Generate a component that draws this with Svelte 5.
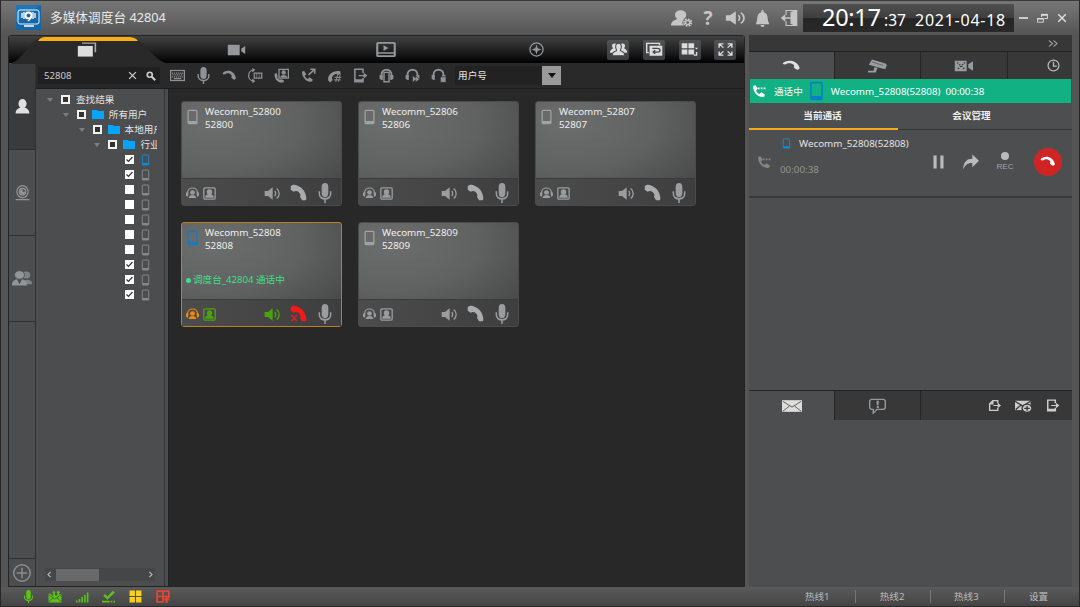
<script lang="ts">
    const phone = '<path d="M1 8C5 1 18 1 22 15c1 3-1 4-3 5l-4-4c0-2 1-3 0-5-2-3-5-4-8-3-1 2-2 2-4 2-1 0-2-1-2-2z"/>';
    const receiver =
        '<path d="M1 3c1-2 6-3 9-1 8 3 12 9 13 17 0 2 0 4-1 4h-5l-3-5c3-3-3-9-6-8l-3 1-4-3z"/>';
    const handset =
        '<path d="M2 3l4-1 4 6-3 3c1 3 3 5 6 6l3-3 6 4-1 4c-10 2-20-8-19-19z"/>';
    const bust = '<circle cx="12" cy="8" r="6.500"/><path d="M1 22c0-6 4-7 8-9h6c4 2 8 3 8 9z"/>';
    const line = 'fill="none" stroke="currentColor"';
    const headset = `<path ${line} stroke-width="3" d="M4 16V11C4 0 20 0 20 11v5"/><path d="M1 11h5v8H4l-3-2zM18 11h5v6l-3 2h-2z"/>`;

    const icons: Record<string, string> = {
        phone,
        receiver,
        handset,
        bust,
        stack: '<path d="M1 7h18v15H1z"/><path d="M6 2h17v14h-2V4H6z" opacity=".7"/>',
        video: '<path d="M1 3h15v18H1zM23 5v14l-5-5v-4z"/>',
        player: `<rect ${line} stroke-width="2.500" x="1.500" y="2.500" width="21" height="19" rx="1"/><path d="M1 16h22v2H1zM9 6l6 4-6 4z"/>`,
        compass: `<circle ${line} cx="12" cy="12" r="10.500"/><path d="M12 4l2 6 6 2-6 2-2 6-2-6-6-2 6-2z"/>`,
        close: `<path ${line} stroke-width="3.500" d="M3 3l18 18M21 3L3 21"/>`,
        search: `<circle ${line} cx="9" cy="9" r="6" stroke-width="4"/><path ${line} stroke-width="5" d="M14 14l8 8"/>`,
        keyboard: `<rect ${line} x="1" y="4" width="22" height="16" stroke-width="2"/><path ${line} stroke-dasharray="2 1.300" d="M3 8h18M4 11h17M3 14h18"/><path d="M6 16h12v2H6z"/>`,
        mic: `<rect x="7" y="0" width="10" height="17" rx="5"/><path ${line} stroke-width="2.300" d="M3.500 10v3c0 8 17 8 17 0v-3M12 19v5"/>`,
        transfer: `<path ${line} d="M10 3C-2 3-2 21 10 21M7 1l3 2-3 3M7 18l3 3-3 2M10 8h12v8H10z"/><path ${line} stroke-width="1" d="M14 8v8M18 8v8"/>`,
        videocall: `<path ${line} d="M8 2h15v14H8z"/><circle cx="15.500" cy="7" r="3.500"/><path d="M10 15c1-5 10-5 11 0zM1 9l3-1 2 5-1 2c2 3 4 4 7 3l4 2-1 3C7 25 0 18 1 9z"/>`,
        callout: `<g transform="translate(0 3) scale(.85)">${handset}</g><path ${line} stroke-width="2.500" d="M12 11l9-8M15 2h7v7"/>`,
        conference: `<path d="M2 20C0 10 11 3 21 5l1 5-5 1-2-2C11 10 8 13 8 16l1 3-4 4z"/><path ${line} stroke-width="1.500" d="M12 15h11M11 19h11M17 11l-3 11M21 11l-3 11"/>`,
        deviceout: `<path ${line} stroke-width="2.500" d="M16 8V2H3v20h13v-6"/><path d="M3 18h13v4H3zM9 11h8V7l6 5-6 5v-4H9z"/>`,
        headphone: `${headset}<path fill="#292929" stroke="currentColor" stroke-width="2.300" d="M8 7h8v15H8z"/>`,
        listen: `${headset}<path stroke="#292929" stroke-width="1" d="M12 12l5 4v-4l6 6-6 5v-4l-5 4z"/>`,
        listenstop: `${headset}<path stroke="#292929" stroke-width="1" d="M15 14h9v9h-9z"/>`,
        crowd: '<g transform="translate(-1 1) scale(.65)"><circle cx="12" cy="8" r="6"/><path d="M1 25c0-6 4-9 8-12h6c4 2 8 6 8 12z"/></g><g transform="translate(9.500 1) scale(.65)"><circle cx="12" cy="8" r="6"/><path d="M1 25c0-6 4-9 8-12h6c4 2 8 6 8 12z"/></g><path stroke="#45474a" stroke-width="1.500" d="M8 8c0-8 8-8 8 0 0 4-2 4-1 6 3 2 6 2 6 8H3c0-6 3-6 6-8 1-2-1-2-1-6z"/>',
        windows: `<path ${line} d="M4 17H1V2h18v3"/><path d="M5 6h18v16H5z"/><path fill="none" stroke="#45474a" stroke-width="2" d="M9 10h7c5 0 5 6 0 6h-6m3-3l-3 3 3 3"/>`,
        grid: '<path d="M1 2h8v8H1zM10.500 2h8v8h-8zM1 12h8v8H1zM10.500 12h8v8h-8zM19.500 9h4.500l-2 3z"/><path d="M23 16v6h-5v-2h3v-4z"/>',
        expand: `<path ${line} d="M3 9V3h6M3 3l6 6M15 3h6v6M21 3l-6 6M3 15v6h6M3 21l6-6M15 21h6v-6M21 21l-6-6"/>`,
        useradmin: `<g transform="translate(-1 0)">${bust}</g><circle cx="19" cy="18" r="6" fill="#666"/><circle cx="19" cy="18" r="4" ${line} stroke-dasharray="2 1.100" stroke-width="3"/><circle cx="19" cy="18" r="2.500" ${line} stroke-width="1.500"/>`,
        speaker: `<path d="M1 8h5l7-6v20l-7-6H1z"/><path ${line} d="M16 8c2 2 2 6 0 8M19 4c5 4 5 12 0 16"/>`,
        bell: '<path d="M12 0c2 0 2 2 2 3 7 2 6 8 7 13l2 4H1l2-4c1-5 0-11 7-13 0-1 0-3 2-3zM9 21h6c0 4-6 4-6 0z"/>',
        exit: `<path ${line} stroke-width="1.500" d="M8 8V2h14v20H8v-6"/><path d="M14 4l9-3v22l-9-3zM1 12l6-5v4h7v2H7v4z"/>`,
        restore: `<path ${line} d="M10 9V3h13v9h-7M1 12h13v8H1z"/><path d="M9 2h14v4H9zM1 11h13v3H1z"/>`,
        more: `<path ${line} stroke-width="2.500" d="M4 4l7 8-7 8M13 4l7 8-7 8"/>`,
        cctv: '<path d="M5 1l18 7-3 9L1 10zM19 8l5 2-2 7-4-1zM8 14l4 1-2 8H0v-3h7z"/><path d="M5 5l14 6" stroke="#383838" stroke-width=".7"/>',
        film: '<path d="M1 3h15v18H1zM24 4v16l-6-5V9z"/><path fill="none" stroke="#383838" stroke-dasharray="2 2" d="M4 6l10 12M14 6L4 18"/>',
        clock: `<circle ${line} stroke-width="2.300" cx="12" cy="12" r="10"/><path ${line} stroke-width="2.300" d="M12 5v8h6"/>`,
        talking: `${handset}<path d="M10 6h3v3h-3zM15 6h3v3h-3zM20 6h3v3h-3z"/>`,
        mobile: `<rect ${line} x="5" y="2" width="14" height="20" rx="1.500"/><path d="M5 18h14v4H5z"/>`,
        agent: `<path ${line} stroke-width="2.300" d="M3 15V11C3-1 21-1 21 11v4"/><path d="M0 11h4v8H2l-2-2zM20 11h4v6l-2 2h-2z"/><circle cx="12" cy="11" r="4.500"/><path d="M5 22c0-8 14-8 14 0z"/>`,
        portrait: `<rect ${line} stroke-width="2.400" x="1.500" y="1.500" width="21" height="21" rx="2"/><circle cx="12" cy="9" r="5"/><path d="M4 20c0-6 4-5 6-7h4c2 2 6 1 6 7z"/>`,
        hangup: `${receiver}<path ${line} stroke-width="1.800" d="M2 14l8 9M10 14l-8 9"/>`,
        pause: '<path d="M4 1h5v22H4zM15 1h5v22h-5z"/>',
        forward: '<path d="M14 2l10 9-10 9v-6C7 14 4 16 0 23 1 12 6 8 14 8z"/>',
        mail: '<path d="M0 2h24v20H0z"/><path fill="none" stroke="#4b4c4e" stroke-width="1.200" d="M1 4l11 10L23 4M1 21l8-9M23 21l-8-9"/>',
        alert: `<path ${line} d="M3 2h18l2 2v11l-2 2H11l-5 6v-6H3l-2-2V4z"/><path d="M10.500 4h3.500l-.5 7h-2.500zM11 12h3v3h-3z"/>`,
        fileout: `<path ${line} stroke-width="2.500" d="M18 8V3H9L3 9v12h15v-5M9 3v6H3"/><path d="M10 11h8V7l6 5-6 5v-4h-8z"/>`,
        mailadd: '<path d="M0 3h22v16H0z"/><path fill="none" stroke="#383838" d="M0 4l11 8L22 4M1 18l7-7"/><circle cx="17" cy="16" r="7" stroke="#383838"/><path stroke="#383838" d="M17 12v8M13 16h8"/>',
        camera: `<circle ${line} cx="12" cy="10" r="9"/><circle ${line} cx="12" cy="10" r="5"/><path d="M12 6a4 4 0 1 0 4 4h-4zM1 21h22v2H1z"/>`,
        group: '<g opacity=".75"><circle cx="17" cy="7" r="5"/><path d="M13 20c0-8 10-8 11-2v2z"/></g><circle cx="9" cy="7" r="6" stroke="#4c4d4f" stroke-width="1"/><path d="M0 22c0-6 2-8 6-9l3 7 3-7c4 1 6 3 6 9z"/>',
        plus: `<circle ${line} cx="12" cy="12" r="11"/><path ${line} d="M12 5v14M5 12h14"/>`,
        left: `<path ${line} stroke-width="3.500" d="M15 5l-7 7 7 7"/>`,
        right: `<path ${line} stroke-width="3.500" d="M9 5l7 7-7 7"/>`,
        inbox: '<path d="M1 7h5v3h3V5L7 5l3-4 3 4h-1v5h4V5h-2l4-4 3 4h-2v3h4v15H1z"/><path d="M2 9l10 8L22 9M2 21l7-7M22 21l-7-7" fill="none" stroke="#444" stroke-width="1.300"/>',
        signal: '<path d="M0 19h3v4H0zM5 16h3v7H5zM10 12h3v11h-3zM15 8h3v15h-3zM20 3h3v20h-3z"/>',
        check: `<path ${line} stroke-width="4.500" d="M4 9l6 6L22 3"/><path d="M0 20h14v3H0zM16 20h3v3h-3zM21 20h3v3h-3z"/>`,
        tiles: '<path d="M1 1h10v10H1zM13 1h10v10H13zM1 13h10v10H1zM13 13h10v10H13z"/>',
        tilesup: `<path ${line} stroke-width="3" d="M2 2h20v10H2zM2 12v10h10V2M15 12h7v3"/><path d="M18 12l6 7h-4v5h-4v-5h-4z"/>`,
    };

    const tabs = ["stack", "video", "player", "compass"];
    const viewButtons = ["crowd", "windows", "grid", "expand"];
    const tools = [
        "keyboard",
        "mic",
        "phone",
        "transfer",
        "videocall",
        "callout",
        "conference",
        "deviceout",
        "headphone",
        "listen",
        "listenstop",
    ];
    const folders = ["查找结果", "所有用户", "本地用户", "行业"];
    const leaves = [true, true, false, false, false, false, false, true, true, true];
    const users = [52800, 52806, 52807, 52808, 52809];
    const callTabs = ["phone", "cctv", "film", "clock"];
    const hotlines = ["热线1", "热线2", "热线3", "设置"];

    let search = $state("52808");
    let selected = $state(52808);
</script>

{#snippet icon(name: string, width: number, height: number = width)}
    <svg {width} {height} viewBox="0 0 24 24" preserveAspectRatio="none" fill="currentColor" stroke-width="2">
        {@html icons[name]}
    </svg>
{/snippet}

<div class="app">
    <header>
        <svg class="logo" width="25" height="25" viewBox="0 0 25 25">
            <rect width="25" height="25" fill="#1767a8" />
            <path d="M0 0h25L0 17z" fill="#2783c2" opacity=".5" />
            <rect x="2" y="5" width="21" height="14" rx="2" fill="none" stroke="#e6f3fb" />
            <circle cx="12.500" cy="10.500" r="3" fill="none" stroke="#fff" stroke-width="2" />
            <path d="M15 11c0 3-1 4-3 5M6 8v5M8 7v7M17 7v7M19 8v5M8 21h10" fill="none" stroke="#fff" stroke-width="1.300" />
        </svg>
        <h1>多媒体调度台 42804</h1>
        <div class="actions">
            <span>{@render icon("useradmin", 21, 18)}</span>
            <span class="help">?</span>
            <span>{@render icon("speaker", 20, 16)}</span>
            <span>{@render icon("bell", 15, 17)}</span>
            <span>{@render icon("exit", 18)}</span>
        </div>
        <div class="clock">
            <span class="time">20:17</span><span class="seconds">:37</span><span class="date">2021-04-18</span>
        </div>
        <div class="window">
            <i class="minimize"></i>
            {@render icon("restore", 11, 11)}
            {@render icon("close", 10)}
        </div>
    </header>

    <div class="body">
        <main>
            <nav>
                <svg class="shape" width="160" height="28" viewBox="0 0 160 28">
                    <path d="M0 28C14 25 20 4 34 1h88c14 3 22 24 38 27z" fill="#292929" />
                    <path d="M29 5c2-3 4-4 7-4h83c5 0 8 1 10 4z" fill="#fbae17" />
                </svg>
                {#each tabs as tab, index}
                    <div class="tab" class:active={index === 0}>
                        {@render icon(tab, index === 1 ? 19 : index === 3 ? 15 : 20, index === 1 ? 14 : index === 3 ? 15 : 17)}
                    </div>
                {/each}
                <div class="views">
                    {#each viewButtons as name}
                        <div class="view">{@render icon(name, 17, 15)}</div>
                    {/each}
                </div>
            </nav>
            <div class="workspace">
                <aside>
                    <div class="side active">{@render icon("bust", 15, 17)}</div>
                    <div class="side">{@render icon("camera", 15, 16)}</div>
                    <div class="side">{@render icon("group", 20, 17)}</div>
                    <div class="add">{@render icon("plus", 18)}</div>
                </aside>
                <div class="center">
                    <div class="toolbar">
                        <div class="search">
                            <input bind:value={search} />
                            {@render icon("close", 9)}
                            {@render icon("search", 10)}
                        </div>
                        <div class="tools">
                            {#each tools as name}
                                <span>{@render icon(name, 15, name === "mic" ? 17 : name === "phone" ? 13 : 15)}</span>
                            {/each}
                        </div>
                        <div class="select">用户号<i></i></div>
                    </div>
                    <div class="panes">
                        <div class="tree">
                            {#each folders as name, depth}
                                <div class="node" style="padding-left: {11 + depth * 15.8}px">
                                    <i class="arrow"></i>
                                    <i class="box"></i>
                                    {#if depth > 0}
                                        <svg class="folder" width="12" height="9" viewBox="0 0 12 9">
                                            <path d="M0 0h5l1 1h6v8H0z" fill="#07a4fb" />
                                        </svg>
                                    {/if}
                                    <span>{name}</span>
                                </div>
                            {/each}
                            {#each leaves as checked, index}
                                <div class="leaf" class:online={index === 0}>
                                    <i class="check">
                                        {#if checked}
                                            <svg width="9" height="9" viewBox="0 0 9 9">
                                                <path d="M1.500 4.500l2 2 4-4.500" fill="none" stroke="#333" stroke-width="1.200" />
                                            </svg>
                                        {/if}
                                    </i>
                                    {@render icon("mobile", 11, 12)}
                                </div>
                            {/each}
                            <div class="scrollbar">
                                {@render icon("left", 9)}
                                <div class="track"><i></i></div>
                                {@render icon("right", 9)}
                            </div>
                        </div>
                        <div class="cards">
                            {#each users as user}
                                <div
                                    class="card"
                                    class:selected={user === selected}
                                    onclick={_ => (selected = user)}
                                    role="none"
                                >
                                    <div class="info">
                                        {@render icon("mobile", 15, 16)}
                                        <div>Wecomm_{user}<br />{user}</div>
                                    </div>
                                    {#if user === selected}
                                        <div class="status"><i></i>调度台_42804 通话中</div>
                                    {/if}
                                    <div class="controls">
                                        <span class="agent">{@render icon("agent", 13, 12)}</span>
                                        <span class="green">{@render icon("portrait", 13)}</span>
                                        <span class="green sound">{@render icon("speaker", 16, 15)}</span>
                                        <span class="call">{@render icon(user === selected ? "hangup" : "receiver", 17, 17)}</span>
                                        <span class="talk">{@render icon("mic", 16, 20)}</span>
                                    </div>
                                </div>
                            {/each}
                        </div>
                    </div>
                </div>
            </div>
        </main>

        <section>
            <div class="collapse">{@render icon("more", 12, 9)}</div>
            <div class="calltabs">
                {#each callTabs as name, index}
                    <div class:active={index === 0}>
                        {@render icon(name, index === 3 ? 13 : 19, index === 0 || index === 3 ? 13 : 14)}
                    </div>
                {/each}
            </div>
            <div class="banner">
                {@render icon("talking", 14)}
                <span class="state">通话中</span>
                {@render icon("mobile", 19, 20)}
                <span class="who">Wecomm_52808(52808)</span>
                <span>00:00:38</span>
            </div>
            <div class="subtabs">
                <div class="active">当前通话</div>
                <div>会议管理</div>
            </div>
            <div class="current">
                <span class="dim">{@render icon("talking", 14)}</span>
                <div class="details">
                    <div class="peer">{@render icon("mobile", 11, 11)} Wecomm_52808(52808)</div>
                    <div class="duration">00:00:38</div>
                </div>
                <span class="pause">{@render icon("pause", 15, 14)}</span>
                <span class="forward">{@render icon("forward", 16, 17)}</span>
                <div class="rec"><i></i>REC</div>
                <div class="end">{@render icon("phone", 16, 13)}</div>
            </div>
            <div class="messages">
                <div class="active">{@render icon("mail", 20, 14)}</div>
                <div>{@render icon("alert", 17, 16)}</div>
                <div class="mailtools">
                    {@render icon("fileout", 13)}
                    {@render icon("mailadd", 17, 14)}
                    {@render icon("deviceout", 14, 13)}
                </div>
            </div>
        </section>
    </div>

    <footer>
        <div class="indicators">
            {@render icon("mic", 11, 13)}
            {@render icon("inbox", 14, 13)}
            {@render icon("signal", 13, 12)}
            {@render icon("check", 13, 13)}
            <span class="yellow">{@render icon("tiles", 13)}</span>
            <span class="red">{@render icon("tilesup", 14, 13)}</span>
        </div>
        <div class="hotlines">
            {#each hotlines as name}
                <div>{name}</div>
            {/each}
        </div>
    </footer>
</div>

<style>
    :global(body) {
        background: #545454;
    }

    .app {
        width: 1080px;
        height: 607px;
        box-sizing: border-box;
        border: 1px solid #282828;
        border-top-color: #3b3a3b;
        display: flex;
        flex-direction: column;
        overflow: hidden;
        background: #555;
        color: #e3e3e3;
        font: 9.6px/13px "Noto Sans", "Noto Sans CJK SC", sans-serif;
    }

    .app * {
        box-sizing: border-box;
    }

    svg {
        display: block;
        flex: none;
    }

    header {
        height: 34px;
        flex: none;
        display: flex;
        align-items: center;
        padding-left: 15px;
        background: linear-gradient(#777, #5a5a5a 85%, #565656);
    }

    .logo {
        margin-top: -2px;
    }

    h1 {
        margin: -2px 0 0 9px;
        flex-grow: 1;
        font-size: 12.7px;
        font-weight: 400;
        line-height: 18px;
        color: #e9e9e9;
    }

    .actions {
        display: flex;
        color: #c5c5c5;
        margin-right: 0.5px;
    }

    .actions span {
        width: 27px;
        height: 20px;
        display: flex;
        align-items: center;
        justify-content: center;
    }

    .help {
        font: 700 19px/20px "Noto Sans", sans-serif;
    }

    .clock {
        width: 211px;
        height: 28px;
        margin-top: -1px;
        padding-left: 19px;
        display: flex;
        align-items: baseline;
        white-space: nowrap;
        color: #fff;
        background: linear-gradient(#505050, #3d3d3d 50%, #252525 52%, #292929);
        line-height: 27px;
    }

    .time {
        width: 65px;
        font-size: 23.5px;
        letter-spacing: -0.3px;
    }

    .seconds {
        width: 28px;
        font-size: 15.5px;
        margin-left: -3px;
    }

    .date {
        font-size: 16px;
        letter-spacing: 0.75px;
        margin-left: 3px;
    }

    .window {
        width: 65px;
        display: flex;
        align-items: center;
        gap: 9px;
        padding-left: 5px;
        color: #ddd;
    }

    .minimize {
        width: 9px;
        height: 2px;
        background: #ccc;
    }

    .body {
        height: 552px;
        flex: none;
        display: flex;
        gap: 4px;
        padding: 0 7px;
    }

    main {
        width: 737px;
        border: 1px solid #242424;
        display: flex;
        flex-direction: column;
        background: #292929;
        border-radius: 3px 3px 0 0;
    }

    nav {
        height: 27px;
        flex: none;
        display: flex;
        position: relative;
        background: linear-gradient(#414141, #202020 55%, #000);
    }

    .shape {
        position: absolute;
        left: 0;
        top: 0;
    }

    .tab {
        width: 149.6px;
        padding-left: 7px;
        display: flex;
        align-items: center;
        justify-content: center;
        position: relative;
        color: #96999b;
    }

    .tab.active {
        color: #ddd;
    }

    .views {
        display: flex;
        gap: 13.7px;
        align-items: center;
    }

    .view {
        width: 22px;
        height: 20px;
        display: flex;
        align-items: center;
        justify-content: center;
        border-radius: 2px;
        background: linear-gradient(#505255, #3b3c3f);
        color: #ddd;
    }

    .workspace {
        flex: 1;
        display: flex;
        min-height: 0;
    }

    aside {
        width: 27px;
        display: flex;
        flex-direction: column;
        background: #4c4d4f;
        border-right: 1px solid #303132;
        padding-top: 1px;
    }

    .side {
        height: 86px;
        display: flex;
        align-items: center;
        justify-content: center;
        border-bottom: 1px solid #303132;
        color: #929698;
    }

    .side.active {
        background: #3a3b3d;
        color: #e0e0e0;
    }

    .add {
        height: 28px;
        margin-top: auto;
        display: flex;
        align-items: center;
        justify-content: center;
        border-top: 1px solid #303132;
        color: #898d8f;
    }

    .center {
        flex: 1;
        display: flex;
        flex-direction: column;
        min-width: 0;
    }

    .toolbar {
        height: 26px;
        flex: none;
        display: flex;
        align-items: center;
        padding-left: 2px;
        border-bottom: 1px solid #1d1d1d;
    }

    .search {
        width: 122px;
        height: 17px;
        display: flex;
        align-items: center;
        gap: 9px;
        padding: 0 4px 0 6px;
        background: #202020;
        color: #ccc;
    }

    input {
        flex: 1;
        min-width: 0;
        padding: 0;
        border: 0;
        outline: 0;
        background: none;
        color: inherit;
        font: inherit;
    }

    .tools {
        display: flex;
        margin-left: 4px;
        color: #8e9294;
    }

    .tools span {
        width: 26.2px;
        height: 20px;
        display: flex;
        align-items: center;
        justify-content: center;
    }

    .select {
        width: 106px;
        height: 19px;
        margin-left: 3px;
        padding-left: 3px;
        display: flex;
        align-items: center;
        justify-content: space-between;
        background: #222;
    }

    .select i {
        width: 19px;
        height: 19px;
        display: flex;
        align-items: center;
        justify-content: center;
        background: #9a9a9a;
    }

    .select i::after {
        content: "";
        border: 4px solid transparent;
        border-top: 5px solid #111;
        border-bottom: 0;
    }

    .panes {
        flex: 1;
        display: flex;
        min-height: 0;
    }

    .tree {
        width: 133px;
        flex: none;
        display: flex;
        flex-direction: column;
        padding: 3px 12px 5px 0;
        background: linear-gradient(90deg, #4c4d4f 128px, #333 128px, #333 129px, #4c4d4f 129px, #4c4d4f 132px, #222 132px);
    }

    .node {
        height: 15px;
        display: flex;
        align-items: center;
        overflow: hidden;
        white-space: nowrap;
    }

    .arrow {
        flex: none;
        border: 3.5px solid transparent;
        border-top: 4px solid #7d7e80;
        border-bottom: 0;
        margin-right: 8px;
    }

    .box {
        flex: none;
        width: 9px;
        height: 9px;
        border: 2px solid #f2f2f2;
        background: #333;
        margin-right: 6px;
    }

    .folder {
        margin-right: 5px;
    }

    .leaf {
        height: 15px;
        display: flex;
        align-items: center;
        gap: 6px;
        padding-left: 89px;
        color: #85898b;
    }

    .leaf.online {
        color: #148ad5;
    }

    .check {
        width: 9px;
        height: 9px;
        background: #fff;
    }

    .scrollbar {
        height: 13px;
        margin: auto 2px 0 9px;
        display: flex;
        align-items: center;
        justify-content: space-between;
        background: #454647;
        color: #b0b0b0;
    }

    .track {
        flex: 1;
        height: 12px;
    }

    .track i {
        display: block;
        width: 43px;
        height: 12px;
        margin-left: 2px;
        background: #696969;
    }

    .cards {
        flex: 1;
        display: grid;
        grid-template-columns: repeat(3, 161px);
        grid-auto-rows: 105px;
        gap: 16px;
        align-content: start;
        padding: 12px 0 0 12px;
        background: #282828;
    }

    .card {
        display: flex;
        flex-direction: column;
        border: 1px solid #4b4b4b;
        border-radius: 3px;
        background: radial-gradient(ellipse 175px 95px at 20% 20%, #6c6e6d, #606161 50%, #464646);
        color: #eee;
        font-size: 9.8px;
        cursor: pointer;
    }

    .card.selected {
        border-color: #b5821f;
    }

    .info {
        display: flex;
        gap: 5px;
        padding: 3px 0 0 3px;
        height: 57px;
    }

    .info :global(svg) {
        margin-top: 4px;
        color: #a0a3a4;
    }

    .selected .info :global(svg) {
        color: #147ac2;
    }

    .status {
        height: 0;
        line-height: 0;
        font-size: 9.6px;
        display: flex;
        align-items: center;
        white-space: nowrap;
        color: #42df89;
        padding-left: 4px;
    }

    .status i {
        width: 5px;
        height: 5px;
        border-radius: 50%;
        margin-right: 2px;
        background: currentColor;
    }

    .controls {
        height: 27px;
        margin-top: auto;
        display: flex;
        align-items: center;
        padding: 2px 8px 0 4px;
        background: linear-gradient(90deg, #4c4c4c, #3e3e3e);
        border-top: 1px solid #3b3b3b;
        color: #999d9e;
    }

    .controls span {
        margin-right: 4px;
    }

    .controls .sound {
        margin: 0 10px 0 auto;
    }

    .controls .call {
        margin: -2px 10px 0 0;
        color: #a9abac;
    }

    .controls .talk {
        margin-right: 0;
    }

    .selected .agent {
        color: #ef8a16;
    }

    .selected .green {
        color: #4aa30d;
    }

    .selected .controls .call {
        color: #f31919;
    }

    section {
        width: 323px;
        display: flex;
        flex-direction: column;
        background: #4d4e50;
    }

    .collapse {
        height: 17px;
        flex: none;
        display: flex;
        align-items: center;
        justify-content: flex-end;
        padding-right: 13px;
        background: #373737;
        border-bottom: 1px solid #222;
        color: #aaa;
    }

    .calltabs {
        height: 27px;
        flex: none;
        display: grid;
        grid-template-columns: 86px 86px 87px 64px;
        background: #383838;
    }

    .calltabs div {
        display: flex;
        align-items: center;
        justify-content: center;
        padding-right: 1px;
        border-right: 1px solid #252525;
        color: #989c9e;
    }

    .calltabs div:last-child {
        padding-left: 27px;
        border-right: 0;
        color: #bbb;
    }

    .calltabs .active,
    .messages .active {
        background: #4d4e50;
        color: #e0e0e0;
    }

    .banner {
        height: 24px;
        flex: none;
        display: flex;
        align-items: center;
        margin: 0 1px;
        padding-left: 2px;
        background: #11b184;
        color: #fff;
        font-size: 9.8px;
    }

    .banner .state {
        font-size: 9.6px;
        margin: 0 4px 0 8px;
    }

    .banner .state + :global(svg) {
        color: #087fc6;
    }

    .who {
        margin: 0 5px;
    }

    .subtabs {
        height: 27px;
        flex: none;
        display: flex;
        border-bottom: 1px solid #353535;
        font-weight: 700;
        color: #eee;
    }

    .subtabs div {
        width: 149px;
        padding-right: 2px;
        text-align: center;
        line-height: 25px;
    }

    .subtabs .active {
        height: 27px;
        border-bottom: 2px solid #f7a81b;
    }

    .current {
        height: 68px;
        flex: none;
        display: flex;
        align-items: center;
        padding: 0 10px 3px 8px;
        border-bottom: 2px solid #393939;
        color: #bbb;
    }

    .dim {
        color: #858585;
    }

    .details {
        width: 150px;
        margin: -11px 0 0 9px;
        font-size: 9.8px;
        white-space: nowrap;
    }

    .peer {
        display: flex;
        align-items: center;
        gap: 7px;
        padding-left: 1px;
        color: #e3e3e3;
    }

    .peer :global(svg) {
        color: #148ad5;
    }

    .duration {
        margin-top: 13px;
        color: #929292;
    }

    .pause {
        margin-left: 1px;
    }

    .forward {
        margin-left: 17px;
    }

    .rec {
        width: 20px;
        margin-left: 16px;
        text-align: center;
        font: 8px/9px "Liberation Sans", sans-serif;
        color: #a4a4a4;
    }

    .rec i {
        display: block;
        width: 8px;
        height: 8px;
        border-radius: 50%;
        margin: 0 auto 2px;
        background: #bbb;
    }

    .end {
        width: 28px;
        height: 28px;
        margin-left: auto;
        display: flex;
        align-items: center;
        justify-content: center;
        border-radius: 50%;
        background: #cf2424;
        color: #fff;
    }

    .messages {
        height: 30px;
        margin-top: 192px;
        display: grid;
        grid-template-columns: 86px 86px 151px;
        border-top: 1px solid #252525;
        background: #383838;
    }

    .messages > div {
        display: flex;
        align-items: center;
        justify-content: center;
        border-right: 1px solid #252525;
        color: #90999c;
    }

    .messages > .active {
        color: #ddd;
    }

    .messages > .mailtools {
        justify-content: flex-end;
        gap: 14px;
        padding-right: 12px;
        border: 0;
        color: #ccc;
    }

    footer {
        flex: 1;
        display: flex;
        align-items: center;
        justify-content: space-between;
        background: linear-gradient(#5a5a5a, #454545);
        color: #bbb;
    }

    .indicators {
        display: flex;
        align-items: center;
        gap: 13.8px;
        padding-left: 22px;
        color: #5bc318;
    }

    .yellow {
        color: #f8d01c;
    }

    .red {
        color: #e64532;
    }

    .hotlines {
        display: flex;
        margin-right: 5px;
    }

    .hotlines div {
        width: 74.3px;
        padding-right: 2px;
        text-align: center;
        border-left: 1px solid #777;
    }

    .hotlines div:first-child {
        border: 0;
    }

    .hotlines div:last-child {
        width: 70px;
    }
</style>
